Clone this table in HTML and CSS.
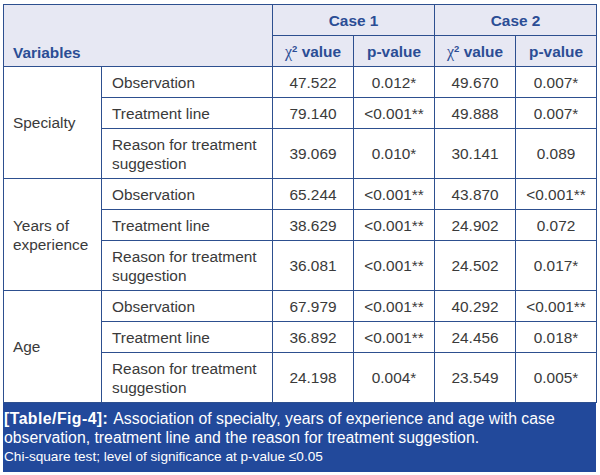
FILE: index.html
```html
<!DOCTYPE html>
<html>
<head>
<meta charset="utf-8">
<link rel="stylesheet" href="styles.css">
</head>
<body>
<div class="figure">
<table class="stats">
  <colgroup>
    <col class="c-var"><col class="c-sub"><col class="c-num"><col class="c-num"><col class="c-num"><col class="c-num">
  </colgroup>
  <thead>
    <tr class="h1">
      <th colspan="2" rowspan="2" class="var-head">Variables</th>
      <th colspan="2">Case 1</th>
      <th colspan="2">Case 2</th>
    </tr>
    <tr class="h2">
      <th><span class="chi">χ</span><sup>2</sup> value</th>
      <th>p-value</th>
      <th><span class="chi">χ</span><sup>2</sup> value</th>
      <th>p-value</th>
    </tr>
  </thead>
  <tbody>
    <tr class="one">
      <td rowspan="3" class="group">Specialty</td>
      <td class="sub">Observation</td><td>47.522</td><td>0.012*</td><td>49.670</td><td>0.007*</td>
    </tr>
    <tr class="one">
      <td class="sub">Treatment line</td><td>79.140</td><td>&lt;0.001**</td><td>49.888</td><td>0.007*</td>
    </tr>
    <tr class="two">
      <td class="sub">Reason for treatment suggestion</td><td>39.069</td><td>0.010*</td><td>30.141</td><td>0.089</td>
    </tr>
    <tr class="one">
      <td rowspan="3" class="group">Years of experience</td>
      <td class="sub">Observation</td><td>65.244</td><td>&lt;0.001**</td><td>43.870</td><td>&lt;0.001**</td>
    </tr>
    <tr class="one">
      <td class="sub">Treatment line</td><td>38.629</td><td>&lt;0.001**</td><td>24.902</td><td>0.072</td>
    </tr>
    <tr class="two">
      <td class="sub">Reason for treatment suggestion</td><td>36.081</td><td>&lt;0.001**</td><td>24.502</td><td>0.017*</td>
    </tr>
    <tr class="one">
      <td rowspan="3" class="group">Age</td>
      <td class="sub">Observation</td><td>67.979</td><td>&lt;0.001**</td><td>40.292</td><td>&lt;0.001**</td>
    </tr>
    <tr class="one">
      <td class="sub">Treatment line</td><td>36.892</td><td>&lt;0.001**</td><td>24.456</td><td>0.018*</td>
    </tr>
    <tr class="two">
      <td class="sub">Reason for treatment suggestion</td><td>24.198</td><td>0.004*</td><td>23.549</td><td>0.005*</td>
    </tr>
  </tbody>
</table>
<div class="caption">
  <div class="cap-line"><b class="cap-label">[Table/Fig-4]:</b><span class="cap-text">Association of specialty, years of experience and age with case</span></div>
  <div class="cap-line"><span class="cap-text">observation, treatment line and the reason for treatment suggestion.</span></div>
  <div class="cap-note">Chi-square test; level of significance at p-value ≤0.05</div>
</div>
</div>
</body>
</html>
```
FILE: styles.css
```css
html, body {
  margin: 0;
  padding: 0;
  background: #ffffff;
}
body {
  font-family: "Liberation Sans", Arial, sans-serif;
  color: #3a3a3a;
}
.figure {
  width: 593px;
  margin: 4px 0 0 3px;
}
.stats {
  width: 593px;
  table-layout: fixed;
  border-collapse: collapse;
  font-size: 15.4px;
  line-height: 19px;
}
.c-var { width: 98px; }
.c-sub { width: 171px; }
.c-num { width: 81px; }
.stats th, .stats td {
  border: 1px solid #2d4f8f;
  padding: 0 4px;
  text-align: center;
  vertical-align: middle;
}
.stats th {
  background: #e7e8f3;
  color: #2b4d95;
  font-weight: bold;
}
.h1 { height: 31px; }
.h2 { height: 31px; }
.stats th.var-head {
  text-align: left;
  vertical-align: bottom;
  padding: 0 9px 4px;
}
.chi {
  font-family: "Liberation Serif", "Times New Roman", serif;
  font-weight: normal;
  font-size: 16px;
}
.stats sup {
  font-size: 9.5px;
  line-height: 0;
  vertical-align: 5px;
}
.one { height: 31px; }
.two { height: 50px; }
.stats td.group {
  text-align: left;
  padding: 0 9px;
}
.stats td.sub {
  text-align: left;
  padding: 0 10px;
}
.caption {
  background: #22499b;
  color: #ffffff;
  height: 69px;
  box-sizing: border-box;
  padding: 6px 4px 6px 1px;
}
.cap-line {
  display: flex;
  gap: 5px;
  font-size: 15.8px;
  line-height: 19px;
  white-space: nowrap;
}
.cap-label {
  letter-spacing: 0.45px;
}
.cap-note {
  font-size: 13.6px;
  line-height: 19px;
  white-space: nowrap;
}
```
